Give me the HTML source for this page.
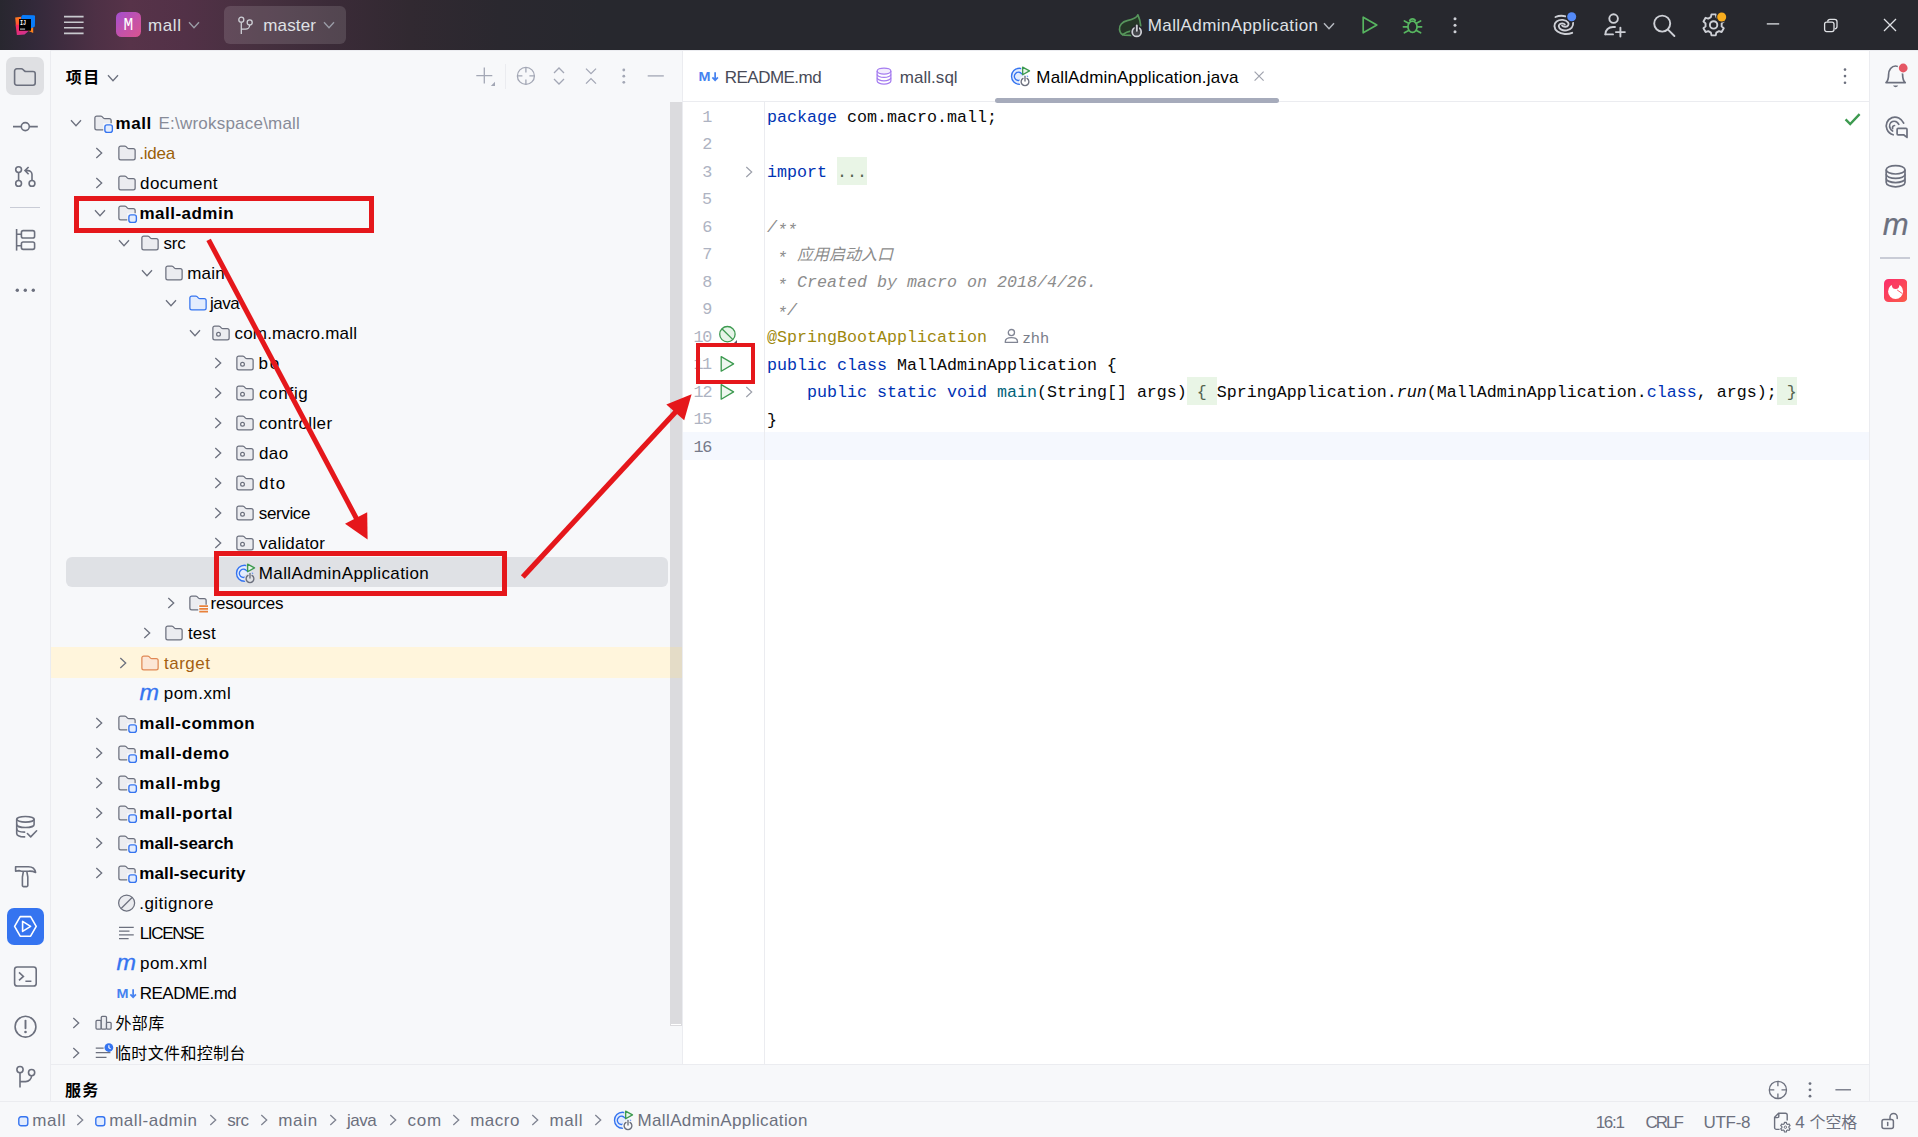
<!DOCTYPE html>
<html lang="zh-CN"><head><meta charset="utf-8"><title>mall – MallAdminApplication.java</title>
<style>
*{box-sizing:border-box;margin:0;padding:0}
html,body{width:1918px;height:1137px;overflow:hidden;background:#f7f8fa}
body{position:relative;font-family:'Liberation Sans','Noto Sans CJK SC',sans-serif;font-size:17px;color:#000}
.abs{position:absolute}
.t{position:absolute;white-space:pre;line-height:30px;height:30px}
.b{font-weight:bold}
.row{position:absolute;left:51px;width:619px;height:30px}
.code{position:absolute;left:767px;white-space:pre;font-family:'Liberation Mono','Noto Sans CJK SC',monospace;font-size:16.67px;line-height:27.5px;height:27.5px;color:#080808}
.ln{position:absolute;font-family:'Liberation Mono','Noto Sans CJK SC',monospace;font-size:16.8px;line-height:27.5px;height:27.5px;color:#aeb3c2;white-space:pre}
.k{color:#0033b3}.c{color:#8c8c8c;font-style:italic}.an{color:#9e880d}.m{color:#00627a}.i{font-style:italic}
.fold{color:#55634f}
.sb{position:absolute;height:35px;line-height:35px;white-space:pre;color:#6c707e;font-size:17px}
</style></head><body>

<div class="abs" style="left:0;top:0;width:1918px;height:50px;background:linear-gradient(90deg,#28272f 0px,#33293a 35px,#4d3045 95px,#573349 130px,#523147 185px,#46303f 260px,#3b2b38 330px,#312931 410px,#2a282f 500px,#27282e 600px,#27282e 1918px)"></div>
<svg style="position:absolute;left:15px;top:15px" width="20" height="20" viewBox="0 0 20 20" fill="none" ><defs><linearGradient id="ij1" x1="0" y1="0" x2="0.3" y2="1"><stop offset="0" stop-color="#fc801d"/><stop offset="1" stop-color="#fe4a3a"/></linearGradient><linearGradient id="ij2" x1="0" y1="0" x2="1" y2="1"><stop offset="0" stop-color="#fe2857"/><stop offset="1" stop-color="#c236a4"/></linearGradient></defs><path d="M0.2 2.6L6.4 1.8L5.4 12L1 11.4Z" fill="url(#ij1)"/><path d="M6.4 1.2Q7.2 0 8.4 0.1L19 0.3Q20.1 0.4 20.1 1.4L19.9 11.6L13 15.2L6 9Z" fill="#087cfa"/><path d="M0.6 9.4L1.9 20.1L9.6 19.4L16.4 13.6L4 10Z" fill="url(#ij2)"/><path d="M12.6 15.6L18.2 17.9L18.2 12.2Z" fill="#fc801d"/><rect x="4" y="4" width="12" height="11.7" fill="#000"/><text x="4.9" y="9.8" font-family="Liberation Mono,monospace" font-weight="bold" font-size="6.8" fill="#fff" textLength="6.1" lengthAdjust="spacingAndGlyphs">IJ</text><rect x="5" y="13.5" width="5.1" height="1.2" fill="#b4b4b4"/></svg>
<svg style="position:absolute;left:63px;top:14px" width="22" height="22" viewBox="0 0 22 22" fill="none" ><path d="M1 2.6h19.6M1 8.2h19.6M1 13.8h19.6M1 19.4h19.6" stroke="#c8c9ce" stroke-width="1.6"/></svg>
<div class="abs" style="left:116px;top:12px;width:25px;height:25px;border-radius:5.5px;background:linear-gradient(135deg,#a34fd0 0%,#c552a8 55%,#d9548f 100%)"></div>
<div class="t" style="left:116px;top:10.3px;width:25px;text-align:center;color:#fff;font-family:'Liberation Mono','Noto Sans CJK SC',monospace;font-size:18px"><span style="display:inline-block;transform:scaleX(.9)">M</span></div>
<div class="t" style="left:148.06px;top:10.5px;letter-spacing:0.563px;color:#dfe1e5">mall</div>
<svg style="position:absolute;left:187px;top:20.2px" width="14" height="10" viewBox="0 0 14 10" fill="none" ><path d="M2 2.3L7 7.7L12 2.3" stroke="#9a9ca6" stroke-width="1.4"/></svg>
<div class="abs" style="left:224px;top:6px;width:122px;height:38px;border-radius:6px;background:rgba(255,255,255,.13)"></div>
<svg style="position:absolute;left:236px;top:15px" width="20" height="20" viewBox="0 0 20 20" fill="none" ><circle cx="5.3" cy="4.7" r="2.5" stroke="#ced0d6" stroke-width="1.3"/><circle cx="13.7" cy="7.4" r="2.5" stroke="#ced0d6" stroke-width="1.3"/><path d="M5.3 7.2V19M5.3 14.2h4.2a4.2 4.2 0 0 0 4.2-4.2" stroke="#ced0d6" stroke-width="1.3"/></svg>
<div class="t" style="left:263.26px;top:10.5px;letter-spacing:0.136px;color:#dfe1e5">master</div>
<svg style="position:absolute;left:321.7px;top:20.2px" width="14" height="10" viewBox="0 0 14 10" fill="none" ><path d="M2 2.3L7 7.7L12 2.3" stroke="#9a9ca6" stroke-width="1.4"/></svg>
<svg style="position:absolute;left:1118px;top:13px" width="25" height="25" viewBox="0 0 25 25" fill="none" ><path d="M19.9 1.8C18.6 5.6 14 6.7 9.2 7.7C4.2 8.8 0.9 12.4 1.5 16.6C2 19.9 4.2 21.9 6.6 22.1L13.6 22.3L22.7 12.8C22.6 8.8 21.4 5.2 19.9 1.8Z" fill="#253627"/><path d="M22.7 12.8C22.6 8.8 21.4 5.2 19.9 1.8C18.6 5.6 14 6.7 9.2 7.7C4.2 8.8 0.9 12.4 1.5 16.6C2 19.9 4.2 21.9 6.6 22.1L13.6 22.3" stroke="#57965c" stroke-width="1.7" stroke-linecap="round" stroke-linejoin="round"/><path d="M4.6 21.7C7.2 19.7 10 18.5 13.4 17.9" stroke="#57965c" stroke-width="1.7" stroke-linecap="round"/><circle cx="18.7" cy="18.9" r="6.6" fill="#27282e"/><circle cx="18.7" cy="18.9" r="4.5" fill="#43454a" stroke="#ced0d6" stroke-width="1.7"/><path d="M18.8 11.6V18" stroke="#27282e" stroke-width="4.4"/><path d="M18.8 12.4V17.8" stroke="#ced0d6" stroke-width="1.9" stroke-linecap="round"/></svg>
<div class="t" style="left:1147.76px;top:10.5px;letter-spacing:0.405px;color:#dfe1e5">MallAdminApplication</div>
<svg style="position:absolute;left:1321.7px;top:20.8px" width="14" height="10" viewBox="0 0 14 10" fill="none" ><path d="M2 2.3L7 7.7L12 2.3" stroke="#b4b8bf" stroke-width="1.5"/></svg>
<svg style="position:absolute;left:1358px;top:13px" width="24" height="24" viewBox="0 0 24 24" fill="none" ><path d="M5.2 4.2V19.8L18.8 12Z" stroke="#57b560" stroke-width="1.7" stroke-linejoin="round"/></svg>
<svg style="position:absolute;left:1400px;top:13px" width="25" height="25" viewBox="0 0 25 25" fill="none" ><ellipse cx="12.5" cy="13.8" rx="4.6" ry="5.6" stroke="#57b560" stroke-width="1.7"/><path d="M9.6 8.2a3 3 0 0 1 5.8 0" stroke="#57b560" stroke-width="1.7"/><path d="M7.8 13.8H3.4M21.6 13.8h-4.4M8.6 10.2L4.4 8M16.4 10.2l4.2-2.2M8.6 17.4L4.4 19.8M16.4 17.4l4.2 2.4" stroke="#57b560" stroke-width="1.7" stroke-linecap="round"/></svg>
<svg style="position:absolute;left:1451px;top:14px" width="8" height="22" viewBox="0 0 8 22" fill="none" ><circle cx="4" cy="4.8" r="1.5" fill="#ced0d6"/><circle cx="4" cy="11.3" r="1.5" fill="#ced0d6"/><circle cx="4" cy="17.8" r="1.5" fill="#ced0d6"/></svg>
<svg style="position:absolute;left:1552px;top:11px" width="26" height="26" viewBox="0 0 26 26" fill="none" ><path d="M3.5 6Q8.6 3.8 13.6 5.4" stroke="#ced0d6" stroke-width="1.9" stroke-linecap="round"/><path d="M20.2 21.8C16 23.6 9.5 23.6 5.5 20.5C1.5 17.4 1.6 12.6 4.6 10.4C8 7.9 14 8.6 16 11.4C17.4 13.4 16 15.6 13.6 15.8C12 15.9 10.6 15.4 10.1 14.6" stroke="#ced0d6" stroke-width="1.9" stroke-linecap="round"/><path d="M21.1 11.4C21.6 15.4 19 18.6 14.6 19.4C10.6 20.1 7.2 18 6.8 15.4C6.5 13.4 8.4 12.4 10.4 12.4C11.6 12.4 12.4 12.9 12.8 13.5" stroke="#ced0d6" stroke-width="1.9" stroke-linecap="round"/><circle cx="19.7" cy="5.8" r="5.7" fill="#27282e"/><circle cx="19.7" cy="5.8" r="4.5" fill="#548af7"/></svg>
<svg style="position:absolute;left:1603px;top:12px" width="26" height="26" viewBox="0 0 26 26" fill="none" ><circle cx="10.6" cy="6.6" r="4.3" stroke="#ced0d6" stroke-width="1.9"/><path d="M2.4 22.2C2.4 18 5.6 15 10 15H12" stroke="#ced0d6" stroke-width="1.9" stroke-linecap="round"/><path d="M2.4 22.4H10" stroke="#ced0d6" stroke-width="1.9" stroke-linecap="round"/><path d="M17.4 15.6V24.6M12.9 20.1H21.9" stroke="#ced0d6" stroke-width="1.9" stroke-linecap="round"/></svg>
<svg style="position:absolute;left:1652px;top:13px" width="25" height="25" viewBox="0 0 25 25" fill="none" ><circle cx="10.2" cy="10.6" r="8" stroke="#ced0d6" stroke-width="1.9"/><path d="M16 16.6L22.4 23" stroke="#ced0d6" stroke-width="1.9" stroke-linecap="round"/></svg>
<svg style="position:absolute;left:1701px;top:12px" width="26" height="26" viewBox="0 0 26 26" fill="none" ><path d="M9.87 5.17 L10.47 2.41 L14.73 2.41 L15.33 5.17 L17.93 6.67 L20.62 5.82 L22.74 9.50 L20.66 11.40 L20.66 14.40 L22.74 16.30 L20.62 19.98 L17.93 19.13 L15.33 20.63 L14.73 23.39 L10.47 23.39 L9.87 20.63 L7.27 19.13 L4.58 19.98 L2.46 16.30 L4.54 14.40 L4.54 11.40 L2.46 9.50 L4.58 5.82 L7.27 6.67Z" stroke="#ced0d6" stroke-width="1.9" stroke-linejoin="round"/><circle cx="12.6" cy="12.9" r="3.7" stroke="#ced0d6" stroke-width="1.9"/><circle cx="20.7" cy="5" r="5.6" fill="#27282e"/><circle cx="20.7" cy="5" r="4.5" fill="#f8ad1e"/></svg>
<svg style="position:absolute;left:1766px;top:18px" width="14" height="12" viewBox="0 0 14 12" fill="none" ><path d="M0.8 5.9H13.2" stroke="#dfe1e5" stroke-width="1.3"/></svg>
<svg style="position:absolute;left:1823px;top:18px" width="16" height="16" viewBox="0 0 16 16" fill="none" ><rect x="1.6" y="4.2" width="9.4" height="9.4" rx="2" stroke="#dfe1e5" stroke-width="1.3"/><path d="M4.6 3.6C4.8 2.2 5.6 1.4 7 1.4H11.6A2.4 2.4 0 0 1 14 3.8V8.4C14 9.8 13.2 10.6 11.8 10.8" stroke="#dfe1e5" stroke-width="1.3"/></svg>
<svg style="position:absolute;left:1883px;top:18px" width="14" height="14" viewBox="0 0 14 14" fill="none" ><path d="M1 1L13 13M13 1L1 13" stroke="#dfe1e5" stroke-width="1.3"/></svg>
<div class="abs" style="left:0;top:50px;width:51px;height:1052px;background:#f7f8fa;border-right:1px solid #ebecf0"></div>
<div class="abs" style="left:6px;top:57.2px;width:37.5px;height:37.4px;border-radius:7px;background:#dfe0e3"></div>
<svg style="position:absolute;left:12px;top:64px" width="26" height="26" viewBox="0 0 26 26" fill="none" ><path d="M2.6 7A2.2 2.2 0 0 1 4.8 4.8H9.4a2.2 2.2 0 0 1 1.56.65L12.4 6.9a2.2 2.2 0 0 0 1.56.65H21A2.2 2.2 0 0 1 23.2 9.75V19A2.2 2.2 0 0 1 21 21.2H4.8A2.2 2.2 0 0 1 2.6 19Z" stroke="#6c707e" stroke-width="1.6"/></svg>
<svg style="position:absolute;left:12px;top:114px" width="26" height="26" viewBox="0 0 26 26" fill="none" ><circle cx="13.3" cy="12.6" r="4" stroke="#6c707e" stroke-width="1.6"/><path d="M1 12.6H9.3M17.3 12.6H25.8" stroke="#6c707e" stroke-width="1.6"/></svg>
<svg style="position:absolute;left:12px;top:164px" width="26" height="26" viewBox="0 0 26 26" fill="none" ><circle cx="6.6" cy="5.6" r="2.9" stroke="#6c707e" stroke-width="1.6"/><circle cx="6.6" cy="19.4" r="2.9" stroke="#6c707e" stroke-width="1.6"/><circle cx="20" cy="19.4" r="2.9" stroke="#6c707e" stroke-width="1.6"/><path d="M6.6 8.5V16.5M20 16.5V10.6A4 4 0 0 0 16 6.6H13.2M16.6 3L13 6.6L16.6 10.2" stroke="#6c707e" stroke-width="1.6"/></svg>
<div class="abs" style="left:10px;top:206.8px;width:30px;height:1.6px;background:#c9ccd6"></div>
<svg style="position:absolute;left:12px;top:227px" width="26" height="26" viewBox="0 0 26 26" fill="none" ><path d="M4.6 2V23.6" stroke="#6c707e" stroke-width="1.6"/><rect x="9.4" y="3.6" width="13.2" height="7.4" rx="1.8" stroke="#6c707e" stroke-width="1.6"/><rect x="9.4" y="15" width="13.2" height="7.4" rx="1.8" stroke="#6c707e" stroke-width="1.6"/><path d="M4.6 7.3H9.4M4.6 18.7H9.4" stroke="#6c707e" stroke-width="1.6"/></svg>
<svg style="position:absolute;left:12px;top:280px" width="26" height="20" viewBox="0 0 26 20" fill="none" ><circle cx="5.3" cy="10.2" r="1.7" fill="#6c707e"/><circle cx="13.3" cy="10.2" r="1.7" fill="#6c707e"/><circle cx="21.3" cy="10.2" r="1.7" fill="#6c707e"/></svg>
<svg style="position:absolute;left:12px;top:814px" width="28" height="26" viewBox="0 0 28 26" fill="none" ><ellipse cx="13.4" cy="5.3" rx="8.7" ry="2.8" stroke="#6c707e" stroke-width="1.6"/><path d="M4.7 5.3V19.4C4.7 21.2 8 22.7 12.6 22.9" stroke="#6c707e" stroke-width="1.6" stroke-linecap="round"/><path d="M22.1 5.3V10.4C22.1 12.1 18.3 13.5 13.4 13.5S4.7 12.1 4.7 10.4" stroke="#6c707e" stroke-width="1.6" stroke-linecap="round"/><path d="M4.7 14.9C4.7 16.5 8 17.9 12.6 18.1" stroke="#6c707e" stroke-width="1.6" stroke-linecap="round"/><path d="M15.4 19.5L18.7 22.9L24.6 16.8" stroke="#6c707e" stroke-width="1.6" stroke-linecap="round" stroke-linejoin="round"/></svg>
<svg style="position:absolute;left:12px;top:863px" width="28" height="26" viewBox="0 0 28 26" fill="none" ><path d="M3.6 3.7H16.5C20.5 3.7 23 6 23.6 9.5C21.5 8.4 19.5 8 16.6 8.2H9.6L7 7.6L3.6 8.2Z" stroke="#6c707e" stroke-width="1.6" stroke-linejoin="round"/><path d="M11.4 8.4L10.4 14V22.4A1.2 1.2 0 0 0 11.6 23.6H14.6A1.2 1.2 0 0 0 15.8 22.4V14L14.8 8.4" stroke="#6c707e" stroke-width="1.6" stroke-linejoin="round"/></svg>
<div class="abs" style="left:6.5px;top:907.5px;width:37.5px;height:37.5px;border-radius:7px;background:#3574f0"></div>
<svg style="position:absolute;left:12px;top:913px" width="27" height="27" viewBox="0 0 27 27" fill="none" ><path d="M8.2 3.6H18.6L24.2 13.4L18.6 23.2H8.2L2.6 13.4Z" stroke="#fff" stroke-width="1.6" stroke-linejoin="round"/><path d="M10.6 8.4V18.4L18.6 13.4Z" stroke="#fff" stroke-width="1.6" stroke-linejoin="round"/></svg>
<svg style="position:absolute;left:12px;top:963px" width="27" height="27" viewBox="0 0 27 27" fill="none" ><rect x="2.6" y="4" width="21.6" height="19" rx="2.6" stroke="#6c707e" stroke-width="1.6"/><path d="M7 9.4L11.4 13.4L7 17.4M13.4 18.2H19.4" stroke="#6c707e" stroke-width="1.6"/></svg>
<svg style="position:absolute;left:12px;top:1013px" width="27" height="27" viewBox="0 0 27 27" fill="none" ><circle cx="13.5" cy="13.7" r="10.4" stroke="#6c707e" stroke-width="1.6"/><path d="M13.5 7.6V15.2" stroke="#6c707e" stroke-width="1.9" stroke-linecap="round"/><circle cx="13.5" cy="19" r="1.3" fill="#6c707e"/></svg>
<svg style="position:absolute;left:12px;top:1063px" width="27" height="27" viewBox="0 0 27 27" fill="none" ><circle cx="8" cy="6.6" r="3.1" stroke="#6c707e" stroke-width="1.6"/><circle cx="19.6" cy="9.6" r="3.1" stroke="#6c707e" stroke-width="1.6"/><path d="M8 9.7V24.6M8 18.6H13.6A6 6 0 0 0 19.6 12.7" stroke="#6c707e" stroke-width="1.6"/></svg>
<div class="abs" style="left:51px;top:50px;width:1867px;height:1px;background:#ebecf0"></div>
<div class="t b" style="left:65.75px;top:62.5px;letter-spacing:1.530px;font-size:16px">项目</div>
<svg style="position:absolute;left:106px;top:73px" width="14" height="10" viewBox="0 0 14 10" fill="none" ><path d="M2 2.3L7 7.7L12 2.3" stroke="#6c707e" stroke-width="1.3"/></svg>
<svg style="position:absolute;left:474px;top:65px" width="24" height="24" viewBox="0 0 24 24" fill="none" ><path d="M10.3 2.6V18.6M2.3 10.6H18.3" stroke="#a3a7b5" stroke-width="1.3"/><path d="M21 16.8V21H16.8Z" fill="#a3a7b5"/></svg>
<div class="abs" style="left:505px;top:64px;width:1px;height:25px;background:#ebecf0"></div>
<svg style="position:absolute;left:515px;top:65px" width="22" height="22" viewBox="0 0 22 22" fill="none" ><circle cx="10.9" cy="10.9" r="8.5" stroke="#a3a7b5" stroke-width="1.3"/><path d="M10.9 2.4V7.4M10.9 14.4V19.4M2.4 10.9H7.4M14.4 10.9H19.4" stroke="#a3a7b5" stroke-width="1.3"/></svg>
<svg style="position:absolute;left:550px;top:65px" width="18" height="22" viewBox="0 0 18 22" fill="none" ><path d="M4 8L9 3L14 8M4 14L9 19L14 14" stroke="#a3a7b5" stroke-width="1.3"/></svg>
<svg style="position:absolute;left:582px;top:65px" width="18" height="22" viewBox="0 0 18 22" fill="none" ><path d="M4 3.6L9 8.6L14 3.6M4 18.6L9 13.6L14 18.6" stroke="#a3a7b5" stroke-width="1.3"/></svg>
<svg style="position:absolute;left:620px;top:66px" width="8" height="20" viewBox="0 0 8 20" fill="none" ><circle cx="3.8" cy="4" r="1.4" fill="#a3a7b5"/><circle cx="3.8" cy="10.2" r="1.4" fill="#a3a7b5"/><circle cx="3.8" cy="16.3" r="1.4" fill="#a3a7b5"/></svg>
<svg style="position:absolute;left:646px;top:70px" width="20" height="12" viewBox="0 0 20 12" fill="none" ><path d="M1.7 5.9H17.8" stroke="#a3a7b5" stroke-width="1.3"/></svg>
<div class="abs" style="left:670px;top:102px;width:12px;height:923.8px;background:#dbdbde"></div>
<div class="abs" style="left:671px;top:1023.8px;width:10px;height:1.2px;background:#fff"></div>
<div class="abs" style="left:682px;top:51px;width:1px;height:1013px;background:#ebecf0"></div>
<svg style="position:absolute;left:69.0px;top:118px" width="14" height="10" viewBox="0 0 14 10" fill="none" ><path d="M2 2.3L7 7.7L12 2.3" stroke="#6c707e" stroke-width="1.3"/></svg>
<svg style="position:absolute;left:92.9px;top:113px;overflow:visible" width="20" height="20" viewBox="0 0 16 16" fill="none"><path d="M1.5 4A1.5 1.5 0 0 1 3 2.5H6.2a1.5 1.5 0 0 1 1.06.44L8.4 4.06A1.5 1.5 0 0 0 9.46 4.5H13A1.5 1.5 0 0 1 14.5 6v6A1.5 1.5 0 0 1 13 13.5H3A1.5 1.5 0 0 1 1.5 12Z" fill="#ebecf0" stroke="#6c707e"/><rect x="8.2" y="8.2" width="8" height="8" fill="#f7f8fa"/><rect x="9.5" y="9.5" width="6" height="6" rx="1.7" fill="#e3ecfd" stroke="#3574f0" stroke-width="1.1"/></svg>
<div class="t b" style="left:115.54px;top:109px;letter-spacing:0.550px">mall</div>
<div class="t" style="left:158.56px;top:109px;letter-spacing:0.212px;color:#878b98">E:\wrokspace\mall</div>
<svg style="position:absolute;left:94.45px;top:146px" width="10" height="14" viewBox="0 0 10 14" fill="none" ><path d="M2.3 2L7.7 7L2.3 12" stroke="#6c707e" stroke-width="1.3"/></svg>
<svg style="position:absolute;left:116.55000000000001px;top:143px;overflow:visible" width="20" height="20" viewBox="0 0 16 16" fill="none"><path d="M1.5 4A1.5 1.5 0 0 1 3 2.5H6.2a1.5 1.5 0 0 1 1.06.44L8.4 4.06A1.5 1.5 0 0 0 9.46 4.5H13A1.5 1.5 0 0 1 14.5 6v6A1.5 1.5 0 0 1 13 13.5H3A1.5 1.5 0 0 1 1.5 12Z" fill="#ebecf0" stroke="#6c707e"/></svg>
<div class="t" style="left:139.24px;top:139px;letter-spacing:-0.233px;color:#9b6108">.idea</div>
<svg style="position:absolute;left:94.45px;top:176px" width="10" height="14" viewBox="0 0 10 14" fill="none" ><path d="M2.3 2L7.7 7L2.3 12" stroke="#6c707e" stroke-width="1.3"/></svg>
<svg style="position:absolute;left:116.55000000000001px;top:173px;overflow:visible" width="20" height="20" viewBox="0 0 16 16" fill="none"><path d="M1.5 4A1.5 1.5 0 0 1 3 2.5H6.2a1.5 1.5 0 0 1 1.06.44L8.4 4.06A1.5 1.5 0 0 0 9.46 4.5H13A1.5 1.5 0 0 1 14.5 6v6A1.5 1.5 0 0 1 13 13.5H3A1.5 1.5 0 0 1 1.5 12Z" fill="#ebecf0" stroke="#6c707e"/></svg>
<div class="t" style="left:140.07px;top:169px;letter-spacing:0.407px">document</div>
<svg style="position:absolute;left:92.75px;top:208px" width="14" height="10" viewBox="0 0 14 10" fill="none" ><path d="M2 2.3L7 7.7L12 2.3" stroke="#6c707e" stroke-width="1.3"/></svg>
<svg style="position:absolute;left:116.55000000000001px;top:203px;overflow:visible" width="20" height="20" viewBox="0 0 16 16" fill="none"><path d="M1.5 4A1.5 1.5 0 0 1 3 2.5H6.2a1.5 1.5 0 0 1 1.06.44L8.4 4.06A1.5 1.5 0 0 0 9.46 4.5H13A1.5 1.5 0 0 1 14.5 6v6A1.5 1.5 0 0 1 13 13.5H3A1.5 1.5 0 0 1 1.5 12Z" fill="#ebecf0" stroke="#6c707e"/><rect x="8.2" y="8.2" width="8" height="8" fill="#f7f8fa"/><rect x="9.5" y="9.5" width="6" height="6" rx="1.7" fill="#e3ecfd" stroke="#3574f0" stroke-width="1.1"/></svg>
<div class="t b" style="left:139.54px;top:199px;letter-spacing:0.471px">mall-admin</div>
<svg style="position:absolute;left:116.5px;top:238px" width="14" height="10" viewBox="0 0 14 10" fill="none" ><path d="M2 2.3L7 7.7L12 2.3" stroke="#6c707e" stroke-width="1.3"/></svg>
<svg style="position:absolute;left:140.2px;top:233px;overflow:visible" width="20" height="20" viewBox="0 0 16 16" fill="none"><path d="M1.5 4A1.5 1.5 0 0 1 3 2.5H6.2a1.5 1.5 0 0 1 1.06.44L8.4 4.06A1.5 1.5 0 0 0 9.46 4.5H13A1.5 1.5 0 0 1 14.5 6v6A1.5 1.5 0 0 1 13 13.5H3A1.5 1.5 0 0 1 1.5 12Z" fill="#ebecf0" stroke="#6c707e"/></svg>
<div class="t" style="left:163.42px;top:229px;letter-spacing:-0.160px">src</div>
<svg style="position:absolute;left:140.25px;top:268px" width="14" height="10" viewBox="0 0 14 10" fill="none" ><path d="M2 2.3L7 7.7L12 2.3" stroke="#6c707e" stroke-width="1.3"/></svg>
<svg style="position:absolute;left:163.85px;top:263px;overflow:visible" width="20" height="20" viewBox="0 0 16 16" fill="none"><path d="M1.5 4A1.5 1.5 0 0 1 3 2.5H6.2a1.5 1.5 0 0 1 1.06.44L8.4 4.06A1.5 1.5 0 0 0 9.46 4.5H13A1.5 1.5 0 0 1 14.5 6v6A1.5 1.5 0 0 1 13 13.5H3A1.5 1.5 0 0 1 1.5 12Z" fill="#ebecf0" stroke="#6c707e"/></svg>
<div class="t" style="left:187.14px;top:259px;letter-spacing:0.203px">main</div>
<svg style="position:absolute;left:164.0px;top:298px" width="14" height="10" viewBox="0 0 14 10" fill="none" ><path d="M2 2.3L7 7.7L12 2.3" stroke="#6c707e" stroke-width="1.3"/></svg>
<svg style="position:absolute;left:187.5px;top:293px;overflow:visible" width="20" height="20" viewBox="0 0 16 16" fill="none"><path d="M1.5 4A1.5 1.5 0 0 1 3 2.5H6.2a1.5 1.5 0 0 1 1.06.44L8.4 4.06A1.5 1.5 0 0 0 9.46 4.5H13A1.5 1.5 0 0 1 14.5 6v6A1.5 1.5 0 0 1 13 13.5H3A1.5 1.5 0 0 1 1.5 12Z" fill="#e3ecfd" stroke="#3574f0"/></svg>
<div class="t" style="left:210.02px;top:289px;letter-spacing:-0.460px">java</div>
<svg style="position:absolute;left:187.75px;top:328px" width="14" height="10" viewBox="0 0 14 10" fill="none" ><path d="M2 2.3L7 7.7L12 2.3" stroke="#6c707e" stroke-width="1.3"/></svg>
<svg style="position:absolute;left:211.15px;top:323px;overflow:visible" width="20" height="20" viewBox="0 0 16 16" fill="none"><path d="M1.5 4A1.5 1.5 0 0 1 3 2.5H6.2a1.5 1.5 0 0 1 1.06.44L8.4 4.06A1.5 1.5 0 0 0 9.46 4.5H13A1.5 1.5 0 0 1 14.5 6v6A1.5 1.5 0 0 1 13 13.5H3A1.5 1.5 0 0 1 1.5 12Z" fill="#ebecf0" stroke="#6c707e"/><circle cx="6" cy="9" r="1.5" fill="#f7f8fa" stroke="#6c707e"/></svg>
<div class="t" style="left:234.50px;top:319px;letter-spacing:0.188px">com.macro.mall</div>
<svg style="position:absolute;left:213.2px;top:356px" width="10" height="14" viewBox="0 0 10 14" fill="none" ><path d="M2.3 2L7.7 7L2.3 12" stroke="#6c707e" stroke-width="1.3"/></svg>
<svg style="position:absolute;left:234.79999999999998px;top:353px;overflow:visible" width="20" height="20" viewBox="0 0 16 16" fill="none"><path d="M1.5 4A1.5 1.5 0 0 1 3 2.5H6.2a1.5 1.5 0 0 1 1.06.44L8.4 4.06A1.5 1.5 0 0 0 9.46 4.5H13A1.5 1.5 0 0 1 14.5 6v6A1.5 1.5 0 0 1 13 13.5H3A1.5 1.5 0 0 1 1.5 12Z" fill="#ebecf0" stroke="#6c707e"/><circle cx="6" cy="9" r="1.5" fill="#f7f8fa" stroke="#6c707e"/></svg>
<div class="t" style="left:258.52px;top:349px;letter-spacing:1.670px">bo</div>
<svg style="position:absolute;left:213.2px;top:386px" width="10" height="14" viewBox="0 0 10 14" fill="none" ><path d="M2.3 2L7.7 7L2.3 12" stroke="#6c707e" stroke-width="1.3"/></svg>
<svg style="position:absolute;left:234.79999999999998px;top:383px;overflow:visible" width="20" height="20" viewBox="0 0 16 16" fill="none"><path d="M1.5 4A1.5 1.5 0 0 1 3 2.5H6.2a1.5 1.5 0 0 1 1.06.44L8.4 4.06A1.5 1.5 0 0 0 9.46 4.5H13A1.5 1.5 0 0 1 14.5 6v6A1.5 1.5 0 0 1 13 13.5H3A1.5 1.5 0 0 1 1.5 12Z" fill="#ebecf0" stroke="#6c707e"/><circle cx="6" cy="9" r="1.5" fill="#f7f8fa" stroke="#6c707e"/></svg>
<div class="t" style="left:258.90px;top:379px;letter-spacing:0.714px">config</div>
<svg style="position:absolute;left:213.2px;top:416px" width="10" height="14" viewBox="0 0 10 14" fill="none" ><path d="M2.3 2L7.7 7L2.3 12" stroke="#6c707e" stroke-width="1.3"/></svg>
<svg style="position:absolute;left:234.79999999999998px;top:413px;overflow:visible" width="20" height="20" viewBox="0 0 16 16" fill="none"><path d="M1.5 4A1.5 1.5 0 0 1 3 2.5H6.2a1.5 1.5 0 0 1 1.06.44L8.4 4.06A1.5 1.5 0 0 0 9.46 4.5H13A1.5 1.5 0 0 1 14.5 6v6A1.5 1.5 0 0 1 13 13.5H3A1.5 1.5 0 0 1 1.5 12Z" fill="#ebecf0" stroke="#6c707e"/><circle cx="6" cy="9" r="1.5" fill="#f7f8fa" stroke="#6c707e"/></svg>
<div class="t" style="left:258.90px;top:409px;letter-spacing:0.361px">controller</div>
<svg style="position:absolute;left:213.2px;top:446px" width="10" height="14" viewBox="0 0 10 14" fill="none" ><path d="M2.3 2L7.7 7L2.3 12" stroke="#6c707e" stroke-width="1.3"/></svg>
<svg style="position:absolute;left:234.79999999999998px;top:443px;overflow:visible" width="20" height="20" viewBox="0 0 16 16" fill="none"><path d="M1.5 4A1.5 1.5 0 0 1 3 2.5H6.2a1.5 1.5 0 0 1 1.06.44L8.4 4.06A1.5 1.5 0 0 0 9.46 4.5H13A1.5 1.5 0 0 1 14.5 6v6A1.5 1.5 0 0 1 13 13.5H3A1.5 1.5 0 0 1 1.5 12Z" fill="#ebecf0" stroke="#6c707e"/><circle cx="6" cy="9" r="1.5" fill="#f7f8fa" stroke="#6c707e"/></svg>
<div class="t" style="left:258.90px;top:439px;letter-spacing:0.485px">dao</div>
<svg style="position:absolute;left:213.2px;top:476px" width="10" height="14" viewBox="0 0 10 14" fill="none" ><path d="M2.3 2L7.7 7L2.3 12" stroke="#6c707e" stroke-width="1.3"/></svg>
<svg style="position:absolute;left:234.79999999999998px;top:473px;overflow:visible" width="20" height="20" viewBox="0 0 16 16" fill="none"><path d="M1.5 4A1.5 1.5 0 0 1 3 2.5H6.2a1.5 1.5 0 0 1 1.06.44L8.4 4.06A1.5 1.5 0 0 0 9.46 4.5H13A1.5 1.5 0 0 1 14.5 6v6A1.5 1.5 0 0 1 13 13.5H3A1.5 1.5 0 0 1 1.5 12Z" fill="#ebecf0" stroke="#6c707e"/><circle cx="6" cy="9" r="1.5" fill="#f7f8fa" stroke="#6c707e"/></svg>
<div class="t" style="left:258.90px;top:469px;letter-spacing:1.380px">dto</div>
<svg style="position:absolute;left:213.2px;top:506px" width="10" height="14" viewBox="0 0 10 14" fill="none" ><path d="M2.3 2L7.7 7L2.3 12" stroke="#6c707e" stroke-width="1.3"/></svg>
<svg style="position:absolute;left:234.79999999999998px;top:503px;overflow:visible" width="20" height="20" viewBox="0 0 16 16" fill="none"><path d="M1.5 4A1.5 1.5 0 0 1 3 2.5H6.2a1.5 1.5 0 0 1 1.06.44L8.4 4.06A1.5 1.5 0 0 0 9.46 4.5H13A1.5 1.5 0 0 1 14.5 6v6A1.5 1.5 0 0 1 13 13.5H3A1.5 1.5 0 0 1 1.5 12Z" fill="#ebecf0" stroke="#6c707e"/><circle cx="6" cy="9" r="1.5" fill="#f7f8fa" stroke="#6c707e"/></svg>
<div class="t" style="left:258.82px;top:499px;letter-spacing:-0.375px">service</div>
<svg style="position:absolute;left:213.2px;top:536px" width="10" height="14" viewBox="0 0 10 14" fill="none" ><path d="M2.3 2L7.7 7L2.3 12" stroke="#6c707e" stroke-width="1.3"/></svg>
<svg style="position:absolute;left:234.79999999999998px;top:533px;overflow:visible" width="20" height="20" viewBox="0 0 16 16" fill="none"><path d="M1.5 4A1.5 1.5 0 0 1 3 2.5H6.2a1.5 1.5 0 0 1 1.06.44L8.4 4.06A1.5 1.5 0 0 0 9.46 4.5H13A1.5 1.5 0 0 1 14.5 6v6A1.5 1.5 0 0 1 13 13.5H3A1.5 1.5 0 0 1 1.5 12Z" fill="#ebecf0" stroke="#6c707e"/><circle cx="6" cy="9" r="1.5" fill="#f7f8fa" stroke="#6c707e"/></svg>
<div class="t" style="left:259.07px;top:529px;letter-spacing:0.198px">validator</div>
<div class="abs" style="left:66px;top:557.2px;width:601.6px;height:30.3px;border-radius:6px;background:#dfe1e5"></div>
<svg style="position:absolute;left:234.79999999999998px;top:563px;overflow:visible" width="20" height="20" viewBox="0 0 16 16" fill="none"><circle cx="7.6" cy="8.2" r="6.4" fill="#e3ecfd" stroke="#3574f0" stroke-width="1.1"/><path d="M9.6 6.6A3.3 3.3 0 1 0 9.6 9.9" stroke="#3574f0" stroke-width="1.1"/><path d="M9 -0.2h8v8H12.5L9 5Z" fill="#dfe1e5"/><circle cx="12" cy="12.5" r="4.6" fill="#dfe1e5"/><path d="M10.1 0.9L15.6 3.9L10.1 7Z" fill="#e8f5ea" stroke="#3d9a50" stroke-width="1.1" stroke-linejoin="round"/><path d="M10.4 9.9A3.1 3.1 0 1 0 13.6 9.9" stroke="#6c707e" stroke-width="1.1" stroke-linecap="round"/><path d="M12 8.4V12" stroke="#6c707e" stroke-width="1.1" stroke-linecap="round"/></svg>
<div class="t" style="left:258.72px;top:559px;letter-spacing:0.397px">MallAdminApplication</div>
<svg style="position:absolute;left:165.7px;top:596px" width="10" height="14" viewBox="0 0 10 14" fill="none" ><path d="M2.3 2L7.7 7L2.3 12" stroke="#6c707e" stroke-width="1.3"/></svg>
<svg style="position:absolute;left:187.5px;top:593px;overflow:visible" width="20" height="20" viewBox="0 0 16 16" fill="none"><path d="M1.5 4A1.5 1.5 0 0 1 3 2.5H6.2a1.5 1.5 0 0 1 1.06.44L8.4 4.06A1.5 1.5 0 0 0 9.46 4.5H13A1.5 1.5 0 0 1 14.5 6v6A1.5 1.5 0 0 1 13 13.5H3A1.5 1.5 0 0 1 1.5 12Z" fill="#ebecf0" stroke="#6c707e"/><rect x="8.2" y="9.4" width="8" height="7" fill="#f7f8fa"/><path d="M9 10.5h7M9 12.7h7M9 14.9h7" stroke="#e8803a" stroke-width="1.3"/></svg>
<div class="t" style="left:210.54px;top:589px;letter-spacing:-0.201px">resources</div>
<svg style="position:absolute;left:141.95px;top:626px" width="10" height="14" viewBox="0 0 10 14" fill="none" ><path d="M2.3 2L7.7 7L2.3 12" stroke="#6c707e" stroke-width="1.3"/></svg>
<svg style="position:absolute;left:163.85px;top:623px;overflow:visible" width="20" height="20" viewBox="0 0 16 16" fill="none"><path d="M1.5 4A1.5 1.5 0 0 1 3 2.5H6.2a1.5 1.5 0 0 1 1.06.44L8.4 4.06A1.5 1.5 0 0 0 9.46 4.5H13A1.5 1.5 0 0 1 14.5 6v6A1.5 1.5 0 0 1 13 13.5H3A1.5 1.5 0 0 1 1.5 12Z" fill="#ebecf0" stroke="#6c707e"/></svg>
<div class="t" style="left:188.05px;top:619px;letter-spacing:0.057px">test</div>
<div class="abs" style="left:51px;top:647px;width:631px;height:30.5px;background:#fff5dc"></div>
<div class="abs" style="left:670px;top:647px;width:12px;height:30.5px;background:#e4dcc7"></div>
<svg style="position:absolute;left:118.2px;top:656px" width="10" height="14" viewBox="0 0 10 14" fill="none" ><path d="M2.3 2L7.7 7L2.3 12" stroke="#6c707e" stroke-width="1.3"/></svg>
<svg style="position:absolute;left:140.2px;top:653px;overflow:visible" width="20" height="20" viewBox="0 0 16 16" fill="none"><path d="M1.5 4A1.5 1.5 0 0 1 3 2.5H6.2a1.5 1.5 0 0 1 1.06.44L8.4 4.06A1.5 1.5 0 0 0 9.46 4.5H13A1.5 1.5 0 0 1 14.5 6v6A1.5 1.5 0 0 1 13 13.5H3A1.5 1.5 0 0 1 1.5 12Z" fill="#fce6d6" stroke="#e08855"/></svg>
<div class="t" style="left:164.05px;top:649px;letter-spacing:0.476px;color:#a35f12">target</div>
<svg style="position:absolute;left:140.2px;top:683px;overflow:visible" width="20" height="20" viewBox="0 0 16 16" fill="none"><text x="-0.4" y="13.2" font-family="Liberation Sans,sans-serif" font-style="italic" font-size="17" fill="#3574f0" stroke="#3574f0" stroke-width="0.25" textLength="15.6" lengthAdjust="spacingAndGlyphs">m</text></svg>
<div class="t" style="left:163.79px;top:679px;letter-spacing:0.460px">pom.xml</div>
<svg style="position:absolute;left:94.45px;top:716px" width="10" height="14" viewBox="0 0 10 14" fill="none" ><path d="M2.3 2L7.7 7L2.3 12" stroke="#6c707e" stroke-width="1.3"/></svg>
<svg style="position:absolute;left:116.55000000000001px;top:713px;overflow:visible" width="20" height="20" viewBox="0 0 16 16" fill="none"><path d="M1.5 4A1.5 1.5 0 0 1 3 2.5H6.2a1.5 1.5 0 0 1 1.06.44L8.4 4.06A1.5 1.5 0 0 0 9.46 4.5H13A1.5 1.5 0 0 1 14.5 6v6A1.5 1.5 0 0 1 13 13.5H3A1.5 1.5 0 0 1 1.5 12Z" fill="#ebecf0" stroke="#6c707e"/><rect x="8.2" y="8.2" width="8" height="8" fill="#f7f8fa"/><rect x="9.5" y="9.5" width="6" height="6" rx="1.7" fill="#e3ecfd" stroke="#3574f0" stroke-width="1.1"/></svg>
<div class="t b" style="left:139.34px;top:709px;letter-spacing:0.490px">mall-common</div>
<svg style="position:absolute;left:94.45px;top:746px" width="10" height="14" viewBox="0 0 10 14" fill="none" ><path d="M2.3 2L7.7 7L2.3 12" stroke="#6c707e" stroke-width="1.3"/></svg>
<svg style="position:absolute;left:116.55000000000001px;top:743px;overflow:visible" width="20" height="20" viewBox="0 0 16 16" fill="none"><path d="M1.5 4A1.5 1.5 0 0 1 3 2.5H6.2a1.5 1.5 0 0 1 1.06.44L8.4 4.06A1.5 1.5 0 0 0 9.46 4.5H13A1.5 1.5 0 0 1 14.5 6v6A1.5 1.5 0 0 1 13 13.5H3A1.5 1.5 0 0 1 1.5 12Z" fill="#ebecf0" stroke="#6c707e"/><rect x="8.2" y="8.2" width="8" height="8" fill="#f7f8fa"/><rect x="9.5" y="9.5" width="6" height="6" rx="1.7" fill="#e3ecfd" stroke="#3574f0" stroke-width="1.1"/></svg>
<div class="t b" style="left:139.34px;top:739px;letter-spacing:0.606px">mall-demo</div>
<svg style="position:absolute;left:94.45px;top:776px" width="10" height="14" viewBox="0 0 10 14" fill="none" ><path d="M2.3 2L7.7 7L2.3 12" stroke="#6c707e" stroke-width="1.3"/></svg>
<svg style="position:absolute;left:116.55000000000001px;top:773px;overflow:visible" width="20" height="20" viewBox="0 0 16 16" fill="none"><path d="M1.5 4A1.5 1.5 0 0 1 3 2.5H6.2a1.5 1.5 0 0 1 1.06.44L8.4 4.06A1.5 1.5 0 0 0 9.46 4.5H13A1.5 1.5 0 0 1 14.5 6v6A1.5 1.5 0 0 1 13 13.5H3A1.5 1.5 0 0 1 1.5 12Z" fill="#ebecf0" stroke="#6c707e"/><rect x="8.2" y="8.2" width="8" height="8" fill="#f7f8fa"/><rect x="9.5" y="9.5" width="6" height="6" rx="1.7" fill="#e3ecfd" stroke="#3574f0" stroke-width="1.1"/></svg>
<div class="t b" style="left:139.34px;top:769px;letter-spacing:0.821px">mall-mbg</div>
<svg style="position:absolute;left:94.45px;top:806px" width="10" height="14" viewBox="0 0 10 14" fill="none" ><path d="M2.3 2L7.7 7L2.3 12" stroke="#6c707e" stroke-width="1.3"/></svg>
<svg style="position:absolute;left:116.55000000000001px;top:803px;overflow:visible" width="20" height="20" viewBox="0 0 16 16" fill="none"><path d="M1.5 4A1.5 1.5 0 0 1 3 2.5H6.2a1.5 1.5 0 0 1 1.06.44L8.4 4.06A1.5 1.5 0 0 0 9.46 4.5H13A1.5 1.5 0 0 1 14.5 6v6A1.5 1.5 0 0 1 13 13.5H3A1.5 1.5 0 0 1 1.5 12Z" fill="#ebecf0" stroke="#6c707e"/><rect x="8.2" y="8.2" width="8" height="8" fill="#f7f8fa"/><rect x="9.5" y="9.5" width="6" height="6" rx="1.7" fill="#e3ecfd" stroke="#3574f0" stroke-width="1.1"/></svg>
<div class="t b" style="left:139.34px;top:799px;letter-spacing:0.620px">mall-portal</div>
<svg style="position:absolute;left:94.45px;top:836px" width="10" height="14" viewBox="0 0 10 14" fill="none" ><path d="M2.3 2L7.7 7L2.3 12" stroke="#6c707e" stroke-width="1.3"/></svg>
<svg style="position:absolute;left:116.55000000000001px;top:833px;overflow:visible" width="20" height="20" viewBox="0 0 16 16" fill="none"><path d="M1.5 4A1.5 1.5 0 0 1 3 2.5H6.2a1.5 1.5 0 0 1 1.06.44L8.4 4.06A1.5 1.5 0 0 0 9.46 4.5H13A1.5 1.5 0 0 1 14.5 6v6A1.5 1.5 0 0 1 13 13.5H3A1.5 1.5 0 0 1 1.5 12Z" fill="#ebecf0" stroke="#6c707e"/><rect x="8.2" y="8.2" width="8" height="8" fill="#f7f8fa"/><rect x="9.5" y="9.5" width="6" height="6" rx="1.7" fill="#e3ecfd" stroke="#3574f0" stroke-width="1.1"/></svg>
<div class="t b" style="left:139.34px;top:829px;letter-spacing:-0.008px">mall-search</div>
<svg style="position:absolute;left:94.45px;top:866px" width="10" height="14" viewBox="0 0 10 14" fill="none" ><path d="M2.3 2L7.7 7L2.3 12" stroke="#6c707e" stroke-width="1.3"/></svg>
<svg style="position:absolute;left:116.55000000000001px;top:863px;overflow:visible" width="20" height="20" viewBox="0 0 16 16" fill="none"><path d="M1.5 4A1.5 1.5 0 0 1 3 2.5H6.2a1.5 1.5 0 0 1 1.06.44L8.4 4.06A1.5 1.5 0 0 0 9.46 4.5H13A1.5 1.5 0 0 1 14.5 6v6A1.5 1.5 0 0 1 13 13.5H3A1.5 1.5 0 0 1 1.5 12Z" fill="#ebecf0" stroke="#6c707e"/><rect x="8.2" y="8.2" width="8" height="8" fill="#f7f8fa"/><rect x="9.5" y="9.5" width="6" height="6" rx="1.7" fill="#e3ecfd" stroke="#3574f0" stroke-width="1.1"/></svg>
<div class="t b" style="left:139.34px;top:859px;letter-spacing:0.098px">mall-security</div>
<svg style="position:absolute;left:116.55000000000001px;top:893px;overflow:visible" width="20" height="20" viewBox="0 0 16 16" fill="none"><circle cx="7.7" cy="8" r="6.4" fill="#ebecf0" stroke="#6c707e"/><path d="M3.3 12.4L12.1 3.6" stroke="#6c707e"/></svg>
<div class="t" style="left:139.24px;top:889px;letter-spacing:0.474px">.gitignore</div>
<svg style="position:absolute;left:116.55000000000001px;top:923px;overflow:visible" width="20" height="20" viewBox="0 0 16 16" fill="none"><path d="M1.6 3.5h11.8M1.6 6.5h8.4M1.6 9.5h11.8M1.6 12.5h7.7" stroke="#6c707e"/></svg>
<div class="t" style="left:139.72px;top:919px;letter-spacing:-1.328px">LICENSE</div>
<svg style="position:absolute;left:116.55000000000001px;top:953px;overflow:visible" width="20" height="20" viewBox="0 0 16 16" fill="none"><text x="-0.4" y="13.2" font-family="Liberation Sans,sans-serif" font-style="italic" font-size="17" fill="#3574f0" stroke="#3574f0" stroke-width="0.25" textLength="15.6" lengthAdjust="spacingAndGlyphs">m</text></svg>
<div class="t" style="left:139.98px;top:949px;letter-spacing:0.458px">pom.xml</div>
<svg style="position:absolute;left:116.55000000000001px;top:983px;overflow:visible" width="20" height="20" viewBox="0 0 16 16" fill="none"><text x="-0.4" y="11.7" font-family="Liberation Sans,sans-serif" font-weight="bold" font-size="9.5" fill="#4682f0" textLength="9.6" lengthAdjust="spacingAndGlyphs">M</text><path d="M12.9 4.9v6.4M10.7 9.1l2.2 2.3 2.2-2.3" stroke="#4682f0" stroke-width="1.4"/></svg>
<div class="t" style="left:139.72px;top:979px;letter-spacing:-0.505px">README.md</div>
<svg style="position:absolute;left:70.7px;top:1016px" width="10" height="14" viewBox="0 0 10 14" fill="none" ><path d="M2.3 2L7.7 7L2.3 12" stroke="#6c707e" stroke-width="1.3"/></svg>
<svg style="position:absolute;left:92.9px;top:1013px;overflow:visible" width="20" height="20" viewBox="0 0 16 16" fill="none"><rect x="2.4" y="5.9" width="4.2" height="7" rx="0.8" fill="#ebecf0" stroke="#6c707e"/><rect x="6.6" y="2.7" width="4.2" height="10.2" rx="0.8" fill="#ebecf0" stroke="#6c707e"/><rect x="10.8" y="7.4" width="3.7" height="5.5" rx="0.8" fill="#ebecf0" stroke="#6c707e"/></svg>
<div class="t" style="left:115.42px;top:1009px;letter-spacing:0.390px;font-size:16px">外部库</div>
<svg style="position:absolute;left:70.7px;top:1046px" width="10" height="14" viewBox="0 0 10 14" fill="none" ><path d="M2.3 2L7.7 7L2.3 12" stroke="#6c707e" stroke-width="1.3"/></svg>
<svg style="position:absolute;left:92.9px;top:1043px;overflow:visible" width="20" height="20" viewBox="0 0 16 16" fill="none"><path d="M2.2 4h6.3M2.2 7.7h11.7M2.2 11.4h8.6" stroke="#6c707e"/><circle cx="12.7" cy="3.6" r="3.5" fill="#3574f0"/><path d="M12.7 1.8v2l1.4 0.9" stroke="#fff" stroke-width="0.9"/></svg>
<div class="t" style="left:115.01px;top:1039px;letter-spacing:0.354px;font-size:16px">临时文件和控制台</div>
<div class="abs" style="left:683px;top:51px;width:1186px;height:1013px;background:#fff"></div>
<div class="abs" style="left:683px;top:101px;width:1186px;height:1px;background:#ebecf0"></div>
<svg style="position:absolute;left:699px;top:66px;overflow:visible" width="20" height="20" viewBox="0 0 16 16" fill="none"><text x="-0.4" y="11.7" font-family="Liberation Sans,sans-serif" font-weight="bold" font-size="9.5" fill="#4682f0" textLength="9.6" lengthAdjust="spacingAndGlyphs">M</text><path d="M12.9 4.9v6.4M10.7 9.1l2.2 2.3 2.2-2.3" stroke="#4682f0" stroke-width="1.4"/></svg>
<div class="t" style="left:724.76px;top:62.7px;letter-spacing:-0.524px;color:#494b57">README.md</div>
<svg style="position:absolute;left:874px;top:66px;overflow:visible" width="20" height="20" viewBox="0 0 16 16" fill="none"><ellipse cx="8" cy="4" rx="5.5" ry="2.4" stroke="#a57cf0" fill="#f3edfd"/><path d="M2.5 4v8c0 1.3 2.5 2.4 5.5 2.4s5.5-1.1 5.5-2.4V4" stroke="#a57cf0"/><path d="M2.5 6.7c0 1.3 2.5 2.4 5.5 2.4s5.5-1.1 5.5-2.4M2.5 9.4c0 1.3 2.5 2.4 5.5 2.4s5.5-1.1 5.5-2.4" stroke="#a57cf0"/></svg>
<div class="t" style="left:899.76px;top:62.7px;letter-spacing:0.039px;color:#494b57">mall.sql</div>
<svg style="position:absolute;left:1010px;top:66px;overflow:visible" width="20" height="20" viewBox="0 0 16 16" fill="none"><circle cx="7.6" cy="8.2" r="6.4" fill="#e3ecfd" stroke="#3574f0" stroke-width="1.1"/><path d="M9.6 6.6A3.3 3.3 0 1 0 9.6 9.9" stroke="#3574f0" stroke-width="1.1"/><path d="M9 -0.2h8v8H12.5L9 5Z" fill="#fff"/><circle cx="12" cy="12.5" r="4.6" fill="#fff"/><path d="M10.1 0.9L15.6 3.9L10.1 7Z" fill="#e8f5ea" stroke="#3d9a50" stroke-width="1.1" stroke-linejoin="round"/><path d="M10.4 9.9A3.1 3.1 0 1 0 13.6 9.9" stroke="#6c707e" stroke-width="1.1" stroke-linecap="round"/><path d="M12 8.4V12" stroke="#6c707e" stroke-width="1.1" stroke-linecap="round"/></svg>
<div class="t" style="left:1036.36px;top:62.7px;letter-spacing:0.149px">MallAdminApplication.java</div>
<svg style="position:absolute;left:1253px;top:70px" width="12" height="12" viewBox="0 0 12 12" fill="none" ><path d="M1.6 1.6L10.6 10.6M10.6 1.6L1.6 10.6" stroke="#a0a3ae" stroke-width="1.2"/></svg>
<div class="abs" style="left:994.5px;top:97.5px;width:284px;height:5px;border-radius:2.5px;background:#a6abbb"></div>
<svg style="position:absolute;left:1841px;top:66px" width="8" height="20" viewBox="0 0 8 20" fill="none" ><circle cx="4" cy="3.6" r="1.3" fill="#6c707e"/><circle cx="4" cy="10.1" r="1.3" fill="#6c707e"/><circle cx="4" cy="16.7" r="1.3" fill="#6c707e"/></svg>
<div class="abs" style="left:683px;top:432px;width:1186px;height:27.5px;background:#f5f8fe"></div>
<div class="abs" style="left:764px;top:102px;width:1px;height:962px;background:#ebecf0"></div>
<div class="abs" style="left:837px;top:157px;width:30px;height:27.5px;background:#e9f5e6"></div>
<div class="abs" style="left:1187px;top:377px;width:30px;height:27.5px;background:#e9f5e6"></div>
<div class="abs" style="left:1777px;top:377px;width:20px;height:27.5px;background:#e9f5e6"></div>
<div class="ln" style="left:702.21px;top:103.6px;color:#aeb3c2">1</div>
<div class="code" style="top:102.0px"><span style="position:relative;top:2.4px"><span class="k">package</span> com.macro.mall;</span></div>
<div class="ln" style="left:702.23px;top:131.1px;color:#aeb3c2">2</div>
<div class="ln" style="left:702.26px;top:158.6px;color:#aeb3c2">3</div>
<div class="code" style="top:157.0px"><span style="position:relative;top:2.4px"><span class="k">import</span> <span class="fold">...</span></span></div>
<div class="ln" style="left:702.05px;top:186.1px;color:#aeb3c2">5</div>
<div class="ln" style="left:702.18px;top:213.6px;color:#aeb3c2">6</div>
<div class="code" style="top:212.0px"><span style="position:relative;top:2.4px"><span class="c">/<span style="position:relative;top:3px">*</span><span style="position:relative;top:3px">*</span></span></span></div>
<div class="ln" style="left:702.14px;top:241.1px;color:#aeb3c2">7</div>
<div class="code" style="top:239.5px"><span style="position:relative;top:2.4px"><span class="c"> <span style="position:relative;top:3px">*</span> <span style="font-size:16px">应用启动入口</span></span></span></div>
<div class="ln" style="left:702.28px;top:268.6px;color:#aeb3c2">8</div>
<div class="code" style="top:267.0px"><span style="position:relative;top:2.4px"><span class="c"> <span style="position:relative;top:3px">*</span> Created by macro on 2018/4/26.</span></span></div>
<div class="ln" style="left:702.25px;top:296.1px;color:#aeb3c2">9</div>
<div class="code" style="top:294.5px"><span style="position:relative;top:2.4px"><span class="c"> <span style="position:relative;top:3px">*</span>/</span></span></div>
<div class="ln" style="left:693.61px;top:323.6px;letter-spacing:-1.340px;color:#aeb3c2">10</div>
<div class="code" style="top:322.0px"><span style="position:relative;top:2.4px"><span class="an">@SpringBootApplication</span></span></div>
<div class="ln" style="left:693.61px;top:351.1px;letter-spacing:-1.770px;color:#aeb3c2">11</div>
<div class="code" style="top:349.5px"><span style="position:relative;top:2.4px"><span class="k">public</span> <span class="k">class</span> MallAdminApplication {</span></div>
<div class="ln" style="left:693.61px;top:378.6px;letter-spacing:-1.270px;color:#aeb3c2">12</div>
<div class="code" style="top:377.0px"><span style="position:relative;top:2.4px">    <span class="k">public</span> <span class="k">static</span> <span class="k">void</span> <span class="m">main</span>(String[] args)<span class="fold"> { </span>SpringApplication.<span class="i">run</span>(MallAdminApplication.<span class="k">class</span>, args);<span class="fold"> }</span></span></div>
<div class="ln" style="left:693.61px;top:406.1px;letter-spacing:-1.320px;color:#aeb3c2">15</div>
<div class="code" style="top:404.5px"><span style="position:relative;top:2.4px">}</span></div>
<div class="ln" style="left:693.61px;top:433.6px;letter-spacing:-1.320px;color:#767a8a">16</div>
<svg style="position:absolute;left:744px;top:164.7px" width="10" height="14" viewBox="0 0 10 14" fill="none" ><path d="M2.3 2L7.7 7L2.3 12" stroke="#9da0ab" stroke-width="1.2"/></svg>
<svg style="position:absolute;left:744px;top:384.9px" width="10" height="14" viewBox="0 0 10 14" fill="none" ><path d="M2.3 2L7.7 7L2.3 12" stroke="#9da0ab" stroke-width="1.2"/></svg>
<svg style="position:absolute;left:719px;top:354.5px" width="17" height="18" viewBox="0 0 17 18" fill="none" ><path d="M2.2 1.6V16.2L14.6 8.9Z" fill="#eef7ef" stroke="#3d9a50" stroke-width="1.3" stroke-linejoin="round"/></svg>
<svg style="position:absolute;left:719px;top:383px" width="17" height="18" viewBox="0 0 17 18" fill="none" ><path d="M2.2 1.6V16.2L14.6 8.9Z" fill="#eef7ef" stroke="#3d9a50" stroke-width="1.3" stroke-linejoin="round"/></svg>
<svg style="position:absolute;left:717px;top:324px" width="22" height="22" viewBox="0 0 22 22" fill="none" ><circle cx="10.4" cy="10.2" r="7.7" fill="#e6f4e8" stroke="#3d9a50" stroke-width="1.3"/><path d="M4.9 4.8L15.9 15.6" stroke="#3d9a50" stroke-width="1.3"/><path d="M20 16V20H16Z" fill="#5a5d6b"/></svg>
<svg style="position:absolute;left:1003px;top:327px" width="18" height="18" viewBox="0 0 18 18" fill="none" ><circle cx="8.4" cy="5.6" r="3.1" stroke="#818594" stroke-width="1.3"/><path d="M2.3 15.4V14.6C2.3 11.8 4.6 10.6 8.4 10.6S14.5 11.8 14.5 14.6V15.4Z" stroke="#818594" stroke-width="1.3" stroke-linejoin="round"/></svg>
<div class="t" style="left:1022.74px;top:322.5px;letter-spacing:0.520px;font-size:15.5px;color:#7a7e8a">zhh</div>
<svg style="position:absolute;left:1843px;top:111px" width="20" height="16" viewBox="0 0 20 16" fill="none" ><path d="M2.6 8.4L7.2 13L16.6 3.2" stroke="#3d9a50" stroke-width="2.4"/></svg>
<div class="abs" style="left:1869px;top:51px;width:49px;height:1051px;background:#f7f8fa;border-left:1px solid #ebecf0"></div>
<svg style="position:absolute;left:1882px;top:62px" width="28" height="28" viewBox="0 0 28 28" fill="none" ><path d="M4 20.6C6.4 18.6 6.6 16 6.6 12.6C6.6 7.6 9.6 4 13.6 4S20.6 7.6 20.6 12.6C20.6 16 20.8 18.6 23.2 20.6Z" stroke="#6c707e" stroke-width="1.7" stroke-linejoin="round"/><path d="M11 23.6C11.8 24.8 12.6 25.2 13.6 25.2S15.4 24.8 16.2 23.6Z" fill="#6c707e"/><circle cx="21.2" cy="6" r="5.6" fill="#f7f8fa"/><circle cx="21.2" cy="6" r="4.4" fill="#e55765"/></svg>
<svg style="position:absolute;left:1883px;top:114px" width="28" height="26" viewBox="0 0 28 26" fill="none" ><path d="M20.7 9.1C18.6 4.6 13.6 1.9 9 3.6C4.2 5.4 2 10.6 4 15.4C5.2 18.2 7.4 20 10.2 20.8" stroke="#6c707e" stroke-width="1.7" stroke-linecap="round"/><path d="M15.8 10.3C14.4 7.8 11.6 6.6 9.4 7.6C6.8 8.8 6 11.8 7.2 14.4C7.8 15.6 8.6 16.5 9.6 17.1" stroke="#6c707e" stroke-width="1.7" stroke-linecap="round"/><path d="M11.5 11.5C10 11.6 9.2 13 9.6 14.6" stroke="#6c707e" stroke-width="1.7" stroke-linecap="round"/><path d="M14.1 15.4A1 1 0 0 1 15.1 14.4H23A1 1 0 0 1 24 15.4V23.4L20.6 20.8H15.1A1 1 0 0 1 14.1 19.8Z" fill="#f7f8fa" stroke="#6c707e" stroke-width="1.7" stroke-linejoin="round"/></svg>
<svg style="position:absolute;left:1883px;top:163px" width="26" height="26" viewBox="0 0 26 26" fill="none" ><ellipse cx="12.6" cy="6.8" rx="9.4" ry="4.2" stroke="#6c707e" stroke-width="1.7"/><path d="M3.2 6.8V19.6C3.2 21.9 7.4 23.8 12.6 23.8S22 21.9 22 19.6V6.8" stroke="#6c707e" stroke-width="1.7"/><path d="M3.2 11.2C3.2 13.5 7.4 15.4 12.6 15.4S22 13.5 22 11.2M3.2 15.4C3.2 17.7 7.4 19.6 12.6 19.6S22 17.7 22 15.4" stroke="#6c707e" stroke-width="1.7"/></svg>
<div class="abs" style="left:1882.8px;top:208.2px;width:28px;height:34px;line-height:34px;font-size:31px;font-style:italic;color:#6c707e;-webkit-text-stroke:0.2px #6c707e;white-space:pre">m</div>
<div class="abs" style="left:1880px;top:257px;width:30px;height:1.6px;background:#c9ccd6"></div>
<svg style="position:absolute;left:1884px;top:279px" width="23.4" height="23" viewBox="0 0 23.4 23" fill="none" ><defs><linearGradient id="rg" x1="0" y1="0" x2="1" y2="1"><stop offset="0" stop-color="#fb2c6c"/><stop offset="1" stop-color="#fb5d48"/></linearGradient></defs><rect x="0" y="0" width="23.4" height="23" rx="4.6" fill="url(#rg)"/><circle cx="11.6" cy="12.4" r="7.5" fill="#fff"/><circle cx="11.6" cy="6.2" r="3.7" fill="#fb3d62"/><path d="M13.2 11L18.4 14.6" stroke="#fb4a58" stroke-width="0.9"/></svg>
<div class="abs" style="left:51px;top:1064px;width:1818px;height:1px;background:#ebecf0"></div>
<div class="abs" style="left:52px;top:1065px;width:1817px;height:37px;background:#f7f8fa"></div>
<div class="t b" style="left:65.11px;top:1075.5px;letter-spacing:1.240px;font-size:16px">服务</div>
<svg style="position:absolute;left:1767px;top:1079px" width="22" height="22" viewBox="0 0 22 22" fill="none" ><circle cx="10.9" cy="10.9" r="8.6" stroke="#6c707e" stroke-width="1.3"/><path d="M10.9 2.3V7.3M10.9 14.5V19.5M2.3 10.9H7.3M14.5 10.9H19.5" stroke="#6c707e" stroke-width="1.3"/></svg>
<svg style="position:absolute;left:1806px;top:1080px" width="8" height="20" viewBox="0 0 8 20" fill="none" ><circle cx="4" cy="3.6" r="1.4" fill="#6c707e"/><circle cx="4" cy="9.8" r="1.4" fill="#6c707e"/><circle cx="4" cy="16.2" r="1.4" fill="#6c707e"/></svg>
<svg style="position:absolute;left:1834px;top:1084px" width="20" height="12" viewBox="0 0 20 12" fill="none" ><path d="M1.4 5.8H17" stroke="#6c707e" stroke-width="1.3"/></svg>
<div class="abs" style="left:0;top:1101px;width:1918px;height:36px;background:#f7f8fa;border-top:1px solid #ebecf0"></div>
<svg style="position:absolute;left:17.7px;top:1115.6px" width="11" height="11" viewBox="0 0 11 11" fill="none" ><rect x="0.8" y="0.8" width="9" height="9" rx="2.3" fill="#e3ecfd" stroke="#3574f0" stroke-width="1.4"/></svg>
<div class="sb" style="left:32.26px;top:1103px;letter-spacing:0.663px">mall</div>
<svg style="position:absolute;left:75px;top:1113.3px" width="10" height="14" viewBox="0 0 10 14" fill="none" ><path d="M2.3 2L7.7 7L2.3 12" stroke="#7f8391" stroke-width="1.3"/></svg>
<svg style="position:absolute;left:94.6px;top:1115.6px" width="11" height="11" viewBox="0 0 11 11" fill="none" ><rect x="0.8" y="0.8" width="9" height="9" rx="2.3" fill="#e3ecfd" stroke="#3574f0" stroke-width="1.4"/></svg>
<div class="sb" style="left:109.16px;top:1103px;letter-spacing:0.532px">mall-admin</div>
<svg style="position:absolute;left:207.5px;top:1113.3px" width="10" height="14" viewBox="0 0 10 14" fill="none" ><path d="M2.3 2L7.7 7L2.3 12" stroke="#7f8391" stroke-width="1.3"/></svg>
<div class="sb" style="left:227.13px;top:1103px;letter-spacing:-0.335px">src</div>
<svg style="position:absolute;left:258.5px;top:1113.3px" width="10" height="14" viewBox="0 0 10 14" fill="none" ><path d="M2.3 2L7.7 7L2.3 12" stroke="#7f8391" stroke-width="1.3"/></svg>
<div class="sb" style="left:278.16px;top:1103px;letter-spacing:0.737px">main</div>
<svg style="position:absolute;left:327.5px;top:1113.3px" width="10" height="14" viewBox="0 0 10 14" fill="none" ><path d="M2.3 2L7.7 7L2.3 12" stroke="#7f8391" stroke-width="1.3"/></svg>
<div class="sb" style="left:346.92px;top:1103px;letter-spacing:-0.470px">java</div>
<svg style="position:absolute;left:388px;top:1113.3px" width="10" height="14" viewBox="0 0 10 14" fill="none" ><path d="M2.3 2L7.7 7L2.3 12" stroke="#7f8391" stroke-width="1.3"/></svg>
<div class="sb" style="left:407.47px;top:1103px;letter-spacing:0.800px">com</div>
<svg style="position:absolute;left:450.5px;top:1113.3px" width="10" height="14" viewBox="0 0 10 14" fill="none" ><path d="M2.3 2L7.7 7L2.3 12" stroke="#7f8391" stroke-width="1.3"/></svg>
<div class="sb" style="left:470.16px;top:1103px;letter-spacing:0.500px">macro</div>
<svg style="position:absolute;left:529.5px;top:1113.3px" width="10" height="14" viewBox="0 0 10 14" fill="none" ><path d="M2.3 2L7.7 7L2.3 12" stroke="#7f8391" stroke-width="1.3"/></svg>
<div class="sb" style="left:549.44px;top:1103px;letter-spacing:0.620px">mall</div>
<svg style="position:absolute;left:592.5px;top:1113.3px" width="10" height="14" viewBox="0 0 10 14" fill="none" ><path d="M2.3 2L7.7 7L2.3 12" stroke="#7f8391" stroke-width="1.3"/></svg>
<svg style="position:absolute;left:613px;top:1110px;overflow:visible" width="20" height="20" viewBox="0 0 16 16" fill="none"><circle cx="7.6" cy="8.2" r="6.4" fill="#e3ecfd" stroke="#3574f0" stroke-width="1.1"/><path d="M9.6 6.6A3.3 3.3 0 1 0 9.6 9.9" stroke="#3574f0" stroke-width="1.1"/><path d="M9 -0.2h8v8H12.5L9 5Z" fill="#f7f8fa"/><circle cx="12" cy="12.5" r="4.6" fill="#f7f8fa"/><path d="M10.1 0.9L15.6 3.9L10.1 7Z" fill="#e8f5ea" stroke="#3d9a50" stroke-width="1.1" stroke-linejoin="round"/><path d="M10.4 9.9A3.1 3.1 0 1 0 13.6 9.9" stroke="#6c707e" stroke-width="1.1" stroke-linecap="round"/><path d="M12 8.4V12" stroke="#6c707e" stroke-width="1.1" stroke-linecap="round"/></svg>
<div class="sb" style="left:637.42px;top:1103px;letter-spacing:0.392px">MallAdminApplication</div>
<div class="sb" style="left:1595.64px;top:1105px;letter-spacing:-1.230px">16:1</div>
<div class="sb" style="left:1645.52px;top:1105px;letter-spacing:-2.023px">CRLF</div>
<div class="sb" style="left:1703.43px;top:1105px;letter-spacing:-0.255px">UTF-8</div>
<svg style="position:absolute;left:1772px;top:1111px" width="20" height="22" viewBox="0 0 20 22" fill="none" ><path d="M7.6 18.4H4.4A1.8 1.8 0 0 1 2.6 16.6V6.2L6.6 2.2H13.4A1.8 1.8 0 0 1 15.2 4V9.6" stroke="#6c707e" stroke-width="1.4"/><path d="M2.6 6.6H5.4A1.4 1.4 0 0 0 6.8 5.2V2.2" stroke="#6c707e" stroke-width="1.4"/><path d="M12.20 12.81 L12.43 11.40 L14.37 11.40 L14.60 12.81 L15.74 13.46 L17.07 12.96 L18.05 14.64 L16.94 15.54 L16.94 16.86 L18.05 17.76 L17.07 19.44 L15.74 18.94 L14.60 19.59 L14.37 21.00 L12.43 21.00 L12.20 19.59 L11.06 18.94 L9.73 19.44 L8.75 17.76 L9.86 16.86 L9.86 15.54 L8.75 14.64 L9.73 12.96 L11.06 13.46Z" fill="#f7f8fa" stroke="#6c707e" stroke-width="1.2" stroke-linejoin="round"/><circle cx="13.4" cy="16.2" r="1.2" stroke="#6c707e" stroke-width="1"/></svg>
<div class="sb" style="left:1795.22px;top:1105px;letter-spacing:-0.008px">4 <span style="font-size:16px">个空格</span></div>
<svg style="position:absolute;left:1880px;top:1111px" width="20" height="20" viewBox="0 0 20 20" fill="none" ><rect x="2" y="8.6" width="11.4" height="8.8" rx="2" stroke="#6c707e" stroke-width="1.5"/><path d="M7.7 11.6V14.4" stroke="#6c707e" stroke-width="1.5" stroke-linecap="round"/><path d="M10 8.6V6.2A3.6 3.6 0 0 1 17.2 6.2V7.6" stroke="#6c707e" stroke-width="1.5" stroke-linecap="round"/></svg>
<div class="abs" style="left:74px;top:195.5px;width:300px;height:37px;border:5px solid #e5171b"></div>
<div class="abs" style="left:214px;top:550.5px;width:293px;height:45.5px;border:5px solid #e5171b"></div>
<div class="abs" style="left:696.3px;top:343.3px;width:58.6px;height:40.3px;border:4.7px solid #e5171b"></div>
<svg style="position:absolute;left:0;top:0" width="1918" height="1137" viewBox="0 0 1918 1137" fill="none"><path d="M208.6 239.8L357 519.5" stroke="#e5171b" stroke-width="5"/><path d="M345 523.7L367.2 512.2L367.6 539.4Z" fill="#e5171b"/><path d="M522.8 577L676 411.5" stroke="#e5171b" stroke-width="5.2"/><path d="M666.3 404.4L684.2 420.3L691.6 394.3Z" fill="#e5171b"/></svg>
</body></html>
